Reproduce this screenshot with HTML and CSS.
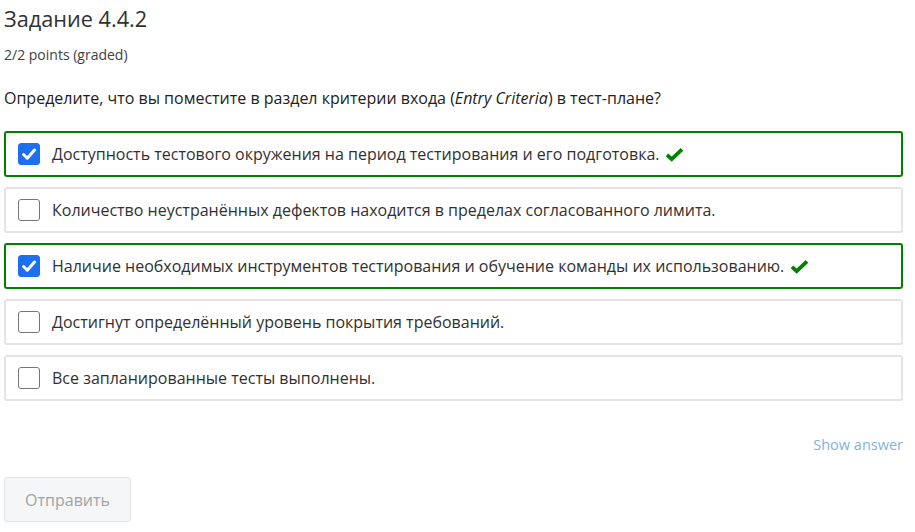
FILE: index.html
```html
<!DOCTYPE html>
<html lang="ru">
<head>
<meta charset="utf-8">
<link rel="stylesheet" href="styles.css">
</head>
<body>
<div class="problem">
  <h3 class="title">Задание 4.4.2</h3>
  <div class="points">2/2 points (graded)</div>
  <p class="question">Определите, что вы поместите в раздел критерии входа (<em>Entry Criteria</em>) в тест-плане?</p>
  <div class="choices">
    <label class="choice correct">
      <span class="box checked"><svg viewBox="0 0 22 22" width="22" height="22"><path d="M5.5 11.5 L9.3 15.2 L16.5 7" fill="none" stroke="#fff" stroke-width="3" stroke-linecap="round" stroke-linejoin="round"/></svg></span>
      <span class="text">Доступность тестового окружения на период тестирования и его подготовка.</span>
      <svg class="ok" viewBox="0 0 20 16" width="19" height="15"><path d="M2 8.5 L7 13 L18 2.5" fill="none" stroke="#008100" stroke-width="4" stroke-linejoin="miter"/></svg>
    </label>
    <label class="choice">
      <span class="box"></span>
      <span class="text">Количество неустранённых дефектов находится в пределах согласованного лимита.</span>
    </label>
    <label class="choice correct">
      <span class="box checked"><svg viewBox="0 0 22 22" width="22" height="22"><path d="M5.5 11.5 L9.3 15.2 L16.5 7" fill="none" stroke="#fff" stroke-width="3" stroke-linecap="round" stroke-linejoin="round"/></svg></span>
      <span class="text">Наличие необходимых инструментов тестирования и обучение команды их использованию.</span>
      <svg class="ok" viewBox="0 0 20 16" width="19" height="15"><path d="M2 8.5 L7 13 L18 2.5" fill="none" stroke="#008100" stroke-width="4" stroke-linejoin="miter"/></svg>
    </label>
    <label class="choice">
      <span class="box"></span>
      <span class="text">Достигнут определённый уровень покрытия требований.</span>
    </label>
    <label class="choice">
      <span class="box"></span>
      <span class="text">Все запланированные тесты выполнены.</span>
    </label>
  </div>
  <div class="actions">
    <a class="show-answer">Show answer</a>
  </div>
  <button class="submit" disabled>Отправить</button>
</div>
</body>
</html>
```
FILE: styles.css
```css
html, body {
  margin: 0;
  padding: 0;
  background: #fff;
}
body {
  font-family: "Open Sans", "Noto Sans", sans-serif;
  color: #313131;
}
.problem {
  width: 899px;
  padding: 0 0 0 4px;
}
.title {
  margin: 0;
  padding-top: 4px;
  font-size: 21.7px;
  font-weight: 400;
  line-height: 30px;
  color: #313131;
}
.points {
  margin-top: 11px;
  font-size: 14px;
  line-height: 19px;
  color: #414141;
}
.question {
  margin: 22px 0 0;
  font-size: 16px;
  line-height: 24px;
  color: #222;
}
.choices {
  margin-top: 21px;
  display: flex;
  flex-direction: column;
  gap: 10px;
}
.choice {
  display: flex;
  align-items: center;
  height: 46px;
  box-sizing: border-box;
  border: 2px solid #e4e4e4;
  border-radius: 3px;
  padding: 0 12px;
  font-size: 16px;
  color: #313131;
}
.choice.correct {
  border-color: #008100;
}
.box {
  width: 22px;
  height: 22px;
  box-sizing: border-box;
  border: 1px solid #767676;
  border-radius: 3px;
  flex: none;
  display: flex;
}
.box.checked {
  background: #1d6ff2;
  border-color: #1d6ff2;
}
.box.checked svg {
  margin: -1px;
}
.text {
  margin-left: 12px;
}
.ok {
  margin-left: 6px;
  flex: none;
}
.actions {
  margin-top: 34px;
  display: flex;
  justify-content: flex-end;
}
.show-answer {
  font-size: 14.5px;
  line-height: 20px;
  color: #7fb4da;
}
.submit {
  margin-top: 22px;
  width: 127px;
  height: 45px;
  font-family: "Open Sans", "Noto Sans", sans-serif;
  font-size: 16px;
  color: #a3a3a3;
  background: #f5f6f7;
  border: 1px solid #e3e4e6;
  border-radius: 3px;
}
```
